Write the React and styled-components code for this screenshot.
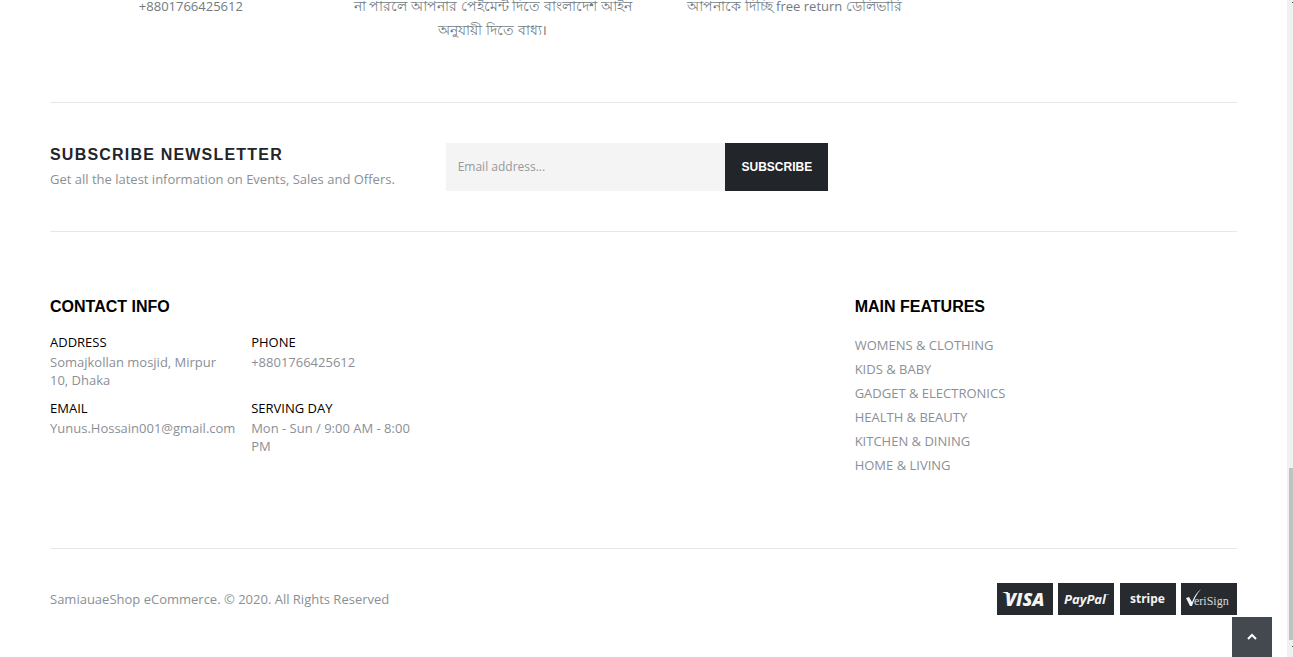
import React from "react";
import styled, { createGlobalStyle } from "styled-components";

const GlobalStyle = createGlobalStyle`
  *, *::before, *::after { box-sizing: border-box; }
  body {
    margin: 0;
    background: #fff;
    color: #8a9096;
    font-family: "Open Sans", "Noto Sans", sans-serif;
    font-size: 13px;
    line-height: 24px;
  }
  h2, h3, p, ul, dl, dd { margin: 0; padding: 0; }
`;

const Page = styled.div`
  padding: 0 56px 0 50px;
  overflow: hidden;
`;

const Features = styled.section`
  display: grid;
  grid-template-columns: repeat(4, 1fr);
  margin: -6px -10px 0;
  padding-bottom: 60px;
  color: #717b80;
  text-align: center;
`;

const Feature = styled.p`
  padding: 0 10px;
`;

const Bengali = styled.span.attrs({ lang: "bn" })`
  font-size: 14px;
`;

const Newsletter = styled.section`
  display: grid;
  grid-template-columns: repeat(3, 1fr);
  padding: 40px 0;
  border-top: 1px solid #e7e7e7;
  border-bottom: 1px solid #e7e7e7;
`;

const NewsletterTitle = styled.h2`
  margin-bottom: 1px;
  color: #222529;
  font: 700 16px/24px "Liberation Sans", Arial, sans-serif;
  letter-spacing: 1.2px;
`;

const NewsletterText = styled.p`
  line-height: 23px;
`;

const SubscribeForm = styled.form`
  display: flex;
  height: 48px;
  margin-right: 13px;
`;

const EmailInput = styled.input`
  flex: 1;
  min-width: 0;
  padding: 0 12px;
  border: 0;
  border-radius: 0;
  background: #f4f4f4;
  color: #777;
  font: 400 12px/24px "Open Sans", sans-serif;
  &::placeholder { color: #999; opacity: 1; }
`;

const SubscribeButton = styled.button`
  width: 103px;
  padding: 0;
  border: 0;
  background: #222529;
  color: #fff;
  font: 700 12px/24px "Liberation Sans", Arial, sans-serif;
  cursor: pointer;
`;

const FooterColumns = styled.section`
  display: grid;
  grid-template-columns: repeat(3, 1fr);
  column-gap: 20px;
  padding: 63px 0 71px;
`;

const ColumnTitle = styled.h3`
  margin-bottom: 14px;
  color: #000;
  font: 700 16px/24px "Liberation Sans", Arial, sans-serif;
`;

const ContactList = styled.dl`
  display: grid;
  grid-template-columns: repeat(2, 1fr);
  column-gap: 20px;
  row-gap: 10px;
  line-height: 18px;
`;

const ContactItem = styled.div`
  min-width: 0;
  white-space: ${(p) => (p.$single ? "nowrap" : "normal")};
`;

const ContactLabel = styled.dt`
  margin-bottom: 2px;
  color: #000;
  text-transform: uppercase;
`;

const FeatureColumn = styled.nav`
  grid-column: 3;
`;

const LinkList = styled.ul`
  list-style: none;
`;

const FooterLink = styled.a`
  color: inherit;
  text-decoration: none;
  text-transform: uppercase;
`;

const Bottom = styled.footer`
  display: flex;
  align-items: center;
  justify-content: space-between;
  padding: 34px 0;
  border-top: 1px solid #e7e7e7;
`;

const Payments = styled.div`
  display: flex;
  justify-content: space-between;
  width: 240px;
`;

const PaymentBadge = styled.svg`
  display: block;
  width: 56px;
  height: 32px;
  background: #272b2f;
`;

const TopButton = styled.button`
  position: fixed;
  right: 21px;
  bottom: 0;
  display: flex;
  align-items: center;
  justify-content: center;
  width: 40px;
  height: 40px;
  padding: 0;
  border: 0;
  background: #43494e;
  cursor: pointer;
`;

const ScrollTrack = styled.div`
  position: fixed;
  top: 0;
  right: 0;
  bottom: 0;
  width: 6px;
  padding: 468px 0 17px 2px;
  background: #f0f0f0;
`;

const ScrollThumb = styled.div`
  height: 100%;
  background: #c1c1c1;
`;

const ScrollArrow = styled.span`
  position: absolute;
  right: 0;
  ${(p) => (p.$end ? "bottom: 10px;" : "top: 2px;")}
  width: 1px;
  height: 1px;
  background: #505050;
`;

const contacts = [
  { label: "Address", value: "Somajkollan mosjid, Mirpur 10, Dhaka" },
  { label: "Phone", value: "+8801766425612" },
  { label: "Email", value: "Yunus.Hossain001@gmail.com", single: true },
  { label: "Serving Day", value: "Mon - Sun / 9:00 AM - 8:00 PM" },
];

const categories = [
  "Womens & Clothing",
  "Kids & Baby",
  "Gadget & Electronics",
  "Health & Beauty",
  "Kitchen & Dining",
  "Home & Living",
];

export default function App() {
  return (
    <>
      <GlobalStyle />
      <Page>
        <Features>
          <Feature>+8801766425612</Feature>
          <Feature>
            <Bengali>
              না পারলে আপনার পেইমেন্ট দিতে বাংলাদেশ আইন
              <br />
              অনুযায়ী দিতে বাধ্য।
            </Bengali>
          </Feature>
          <Feature>
            <Bengali>আপনাকে দিচ্ছি</Bengali> free return <Bengali>ডেলিভারি</Bengali>
          </Feature>
        </Features>

        <Newsletter>
          <div>
            <NewsletterTitle>SUBSCRIBE NEWSLETTER</NewsletterTitle>
            <NewsletterText>
              Get all the latest information on Events, Sales and Offers.
            </NewsletterText>
          </div>
          <SubscribeForm onSubmit={(e) => e.preventDefault()}>
            <EmailInput type="email" placeholder="Email address..." aria-label="Email address" />
            <SubscribeButton type="submit">SUBSCRIBE</SubscribeButton>
          </SubscribeForm>
        </Newsletter>

        <FooterColumns>
          <div>
            <ColumnTitle>CONTACT INFO</ColumnTitle>
            <ContactList>
              {contacts.map((c) => (
                <ContactItem key={c.label} $single={c.single}>
                  <ContactLabel>{c.label}</ContactLabel>
                  <dd>{c.value}</dd>
                </ContactItem>
              ))}
            </ContactList>
          </div>
          <FeatureColumn>
            <ColumnTitle>MAIN FEATURES</ColumnTitle>
            <LinkList>
              {categories.map((name) => (
                <li key={name}>
                  <FooterLink href="#">{name}</FooterLink>
                </li>
              ))}
            </LinkList>
          </FeatureColumn>
        </FooterColumns>

        <Bottom>
          <p>SamiauaeShop eCommerce. © 2020. All Rights Reserved</p>
          <Payments>
            <PaymentBadge viewBox="0 0 56 32" role="img" aria-label="Visa">
              <path d="M5 9h6l3 9-2-5Q9 10 5 9z" fill="#f4f4f4" />
              <text x="8" y="23" fill="#f4f4f4" fontFamily="Open Sans" fontWeight="800" fontStyle="italic" fontSize="18">VISA</text>
            </PaymentBadge>
            <PaymentBadge viewBox="0 0 56 32" role="img" aria-label="PayPal">
              <text x="6" y="21" fill="#f4f4f4" fontFamily="Open Sans" fontWeight="700" fontStyle="italic" fontSize="13">PayPal</text>
              <path d="M48 11.500h3" stroke="#888" />
            </PaymentBadge>
            <PaymentBadge viewBox="0 0 56 32" role="img" aria-label="Stripe">
              <text x="10" y="20" fill="#f4f4f4" fontFamily="Noto Sans" fontWeight="700" fontSize="12">stripe</text>
            </PaymentBadge>
            <PaymentBadge viewBox="0 0 56 32" role="img" aria-label="VeriSign">
              <path d="M5 15l3-1 3 5Q14 11 20 6Q14 13 11 23H9z" fill="#f4f4f4" />
              <text x="13" y="22" fill="#d8d8d8" fontFamily="Liberation Serif" fontSize="12">eriSign</text>
            </PaymentBadge>
          </Payments>
        </Bottom>
      </Page>

      <TopButton type="button" aria-label="Back to top">
        <svg width="12" height="8" viewBox="0 0 12 8" fill="none">
          <path d="M2 6l4-4 4 4" stroke="#fff" strokeWidth="2" />
        </svg>
      </TopButton>
      <ScrollTrack>
        <ScrollArrow />
        <ScrollThumb />
        <ScrollArrow $end />
      </ScrollTrack>
    </>
  );
}
